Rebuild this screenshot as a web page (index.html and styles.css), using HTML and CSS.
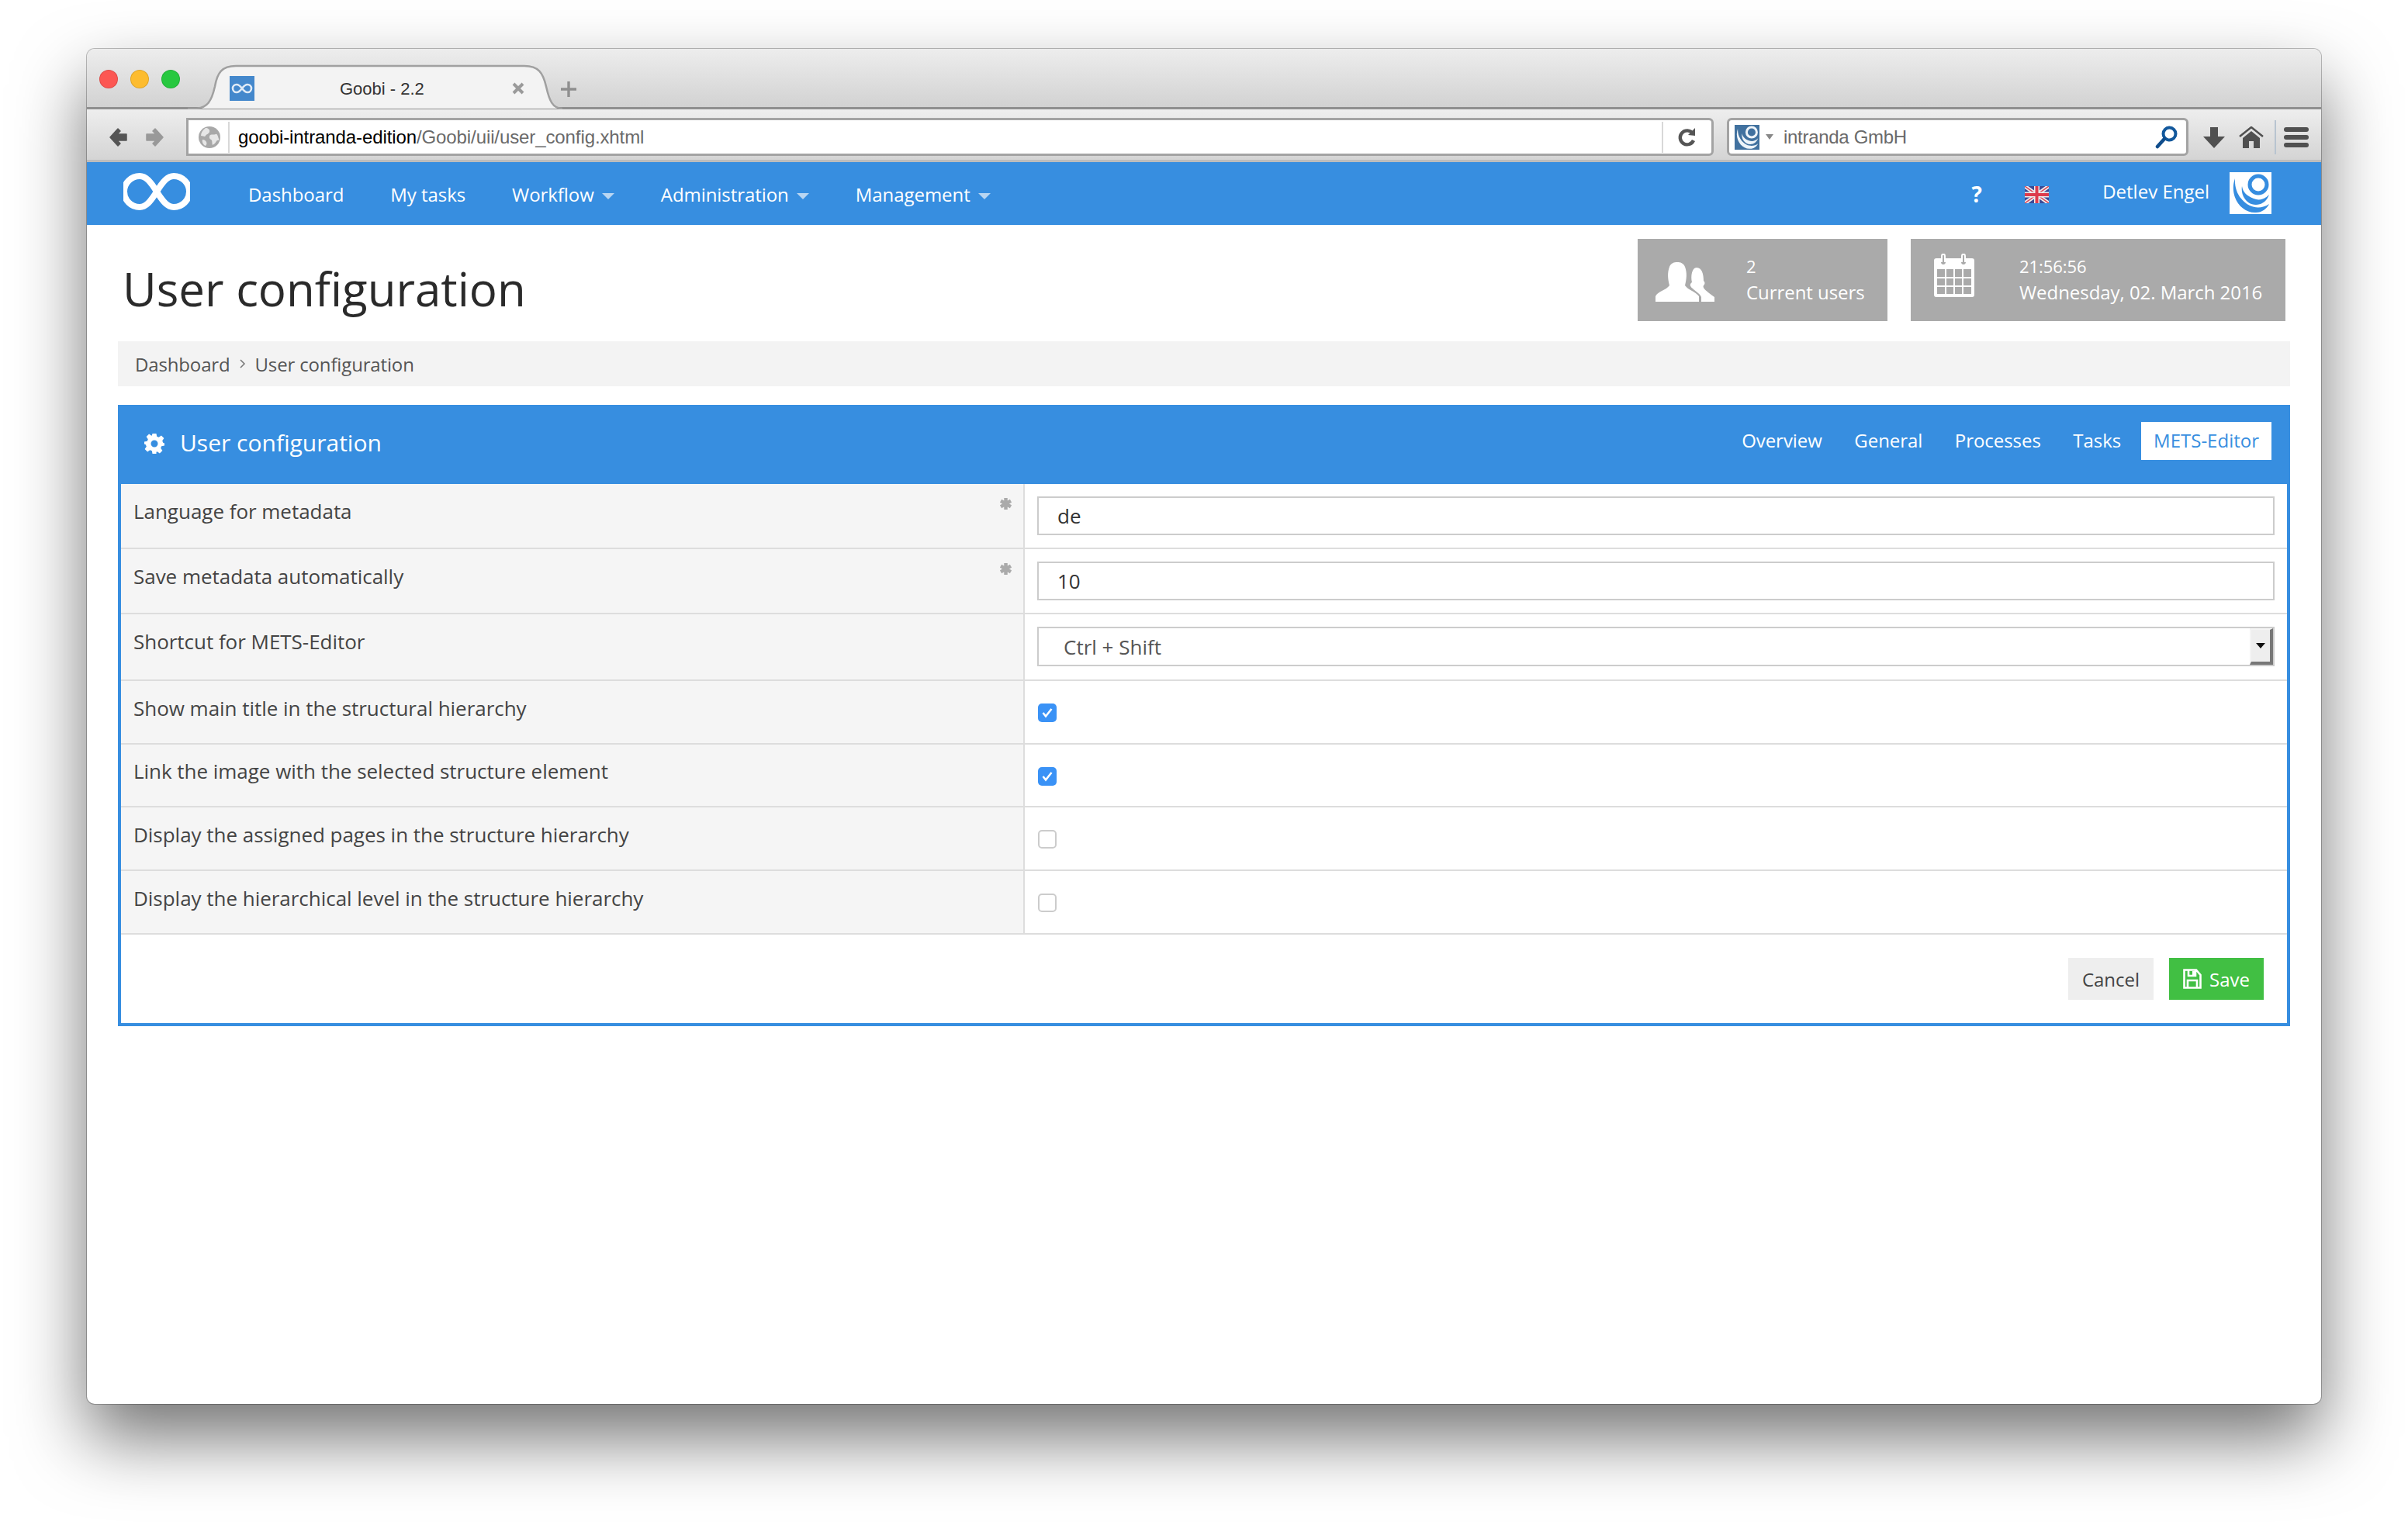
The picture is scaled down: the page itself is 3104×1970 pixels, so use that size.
FILE: index.html
```html
<!DOCTYPE html>
<html lang="en">
<head>
<meta charset="utf-8">
<title>Goobi - 2.2</title>
<link rel="stylesheet" href="styles.css">
</head>
<body>
<div class="window">
  <div class="tabstrip">
    <div class="lights"><i class="light red"></i><i class="light yellow"></i><i class="light green"></i></div>
    <div class="tab">
      <svg class="tab-shape" viewBox="0 0 483 58" preserveAspectRatio="none"><path d="M0 57H8C26 57 31 46 35 28C38 10 44 1 62 1H434C452 1 458 10 462 28C466 46 470 57 483 57" fill="#f3f3f3" stroke="#a0a0a0" stroke-width="2.5"/></svg>
      <span class="favicon"><svg viewBox="0 0 32 32" width="32" height="32"><path d="M16 16C13 12 11 11 9 11a5 5 0 0 0 0 10c2 0 4-1 7-5s5-5 7-5a5 5 0 0 1 0 10c-2 0-4-1-7-5z" fill="none" stroke="#dfeaf6" stroke-width="2.6"/></svg></span>
      <span class="tab-title">Goobi - 2.2</span>
      <svg class="tab-close" viewBox="0 0 16 16" width="16" height="16"><path d="M2 2L14 14M14 2L2 14" stroke="#9a9a9a" stroke-width="4"/></svg>
    </div>
    <svg class="tab-new" viewBox="0 0 20 20" width="20" height="20"><path d="M10 0V20M0 10H20" stroke="#8f8f8f" stroke-width="3.4"/></svg>
  </div>
  <div class="toolbar">
    <svg class="arrow" viewBox="0 0 24 26" width="24" height="26"><path d="M12 2L2 13L12 24L15 21L11 17H23V9H11L15 5Z" fill="#555" stroke="#555" stroke-width="1.5" stroke-linejoin="round"/></svg>
    <svg class="arrow" viewBox="0 0 24 26" width="24" height="26"><path d="M12 2L22 13L12 24L9 21L13 17H1V9H13L9 5Z" fill="#999" stroke="#999" stroke-width="1.5" stroke-linejoin="round"/></svg>
    <div class="urlbar">
      <svg class="globe" viewBox="0 0 28 28" width="28" height="28"><circle cx="14" cy="14" r="14" fill="#a8a8a8"/><path d="M9 2C5 5 3 8 3 12c3 0 5 2 6 0s4-2 5-5-2-5-5-5zM15 11c2-1 5 0 7-1s3 3 4 6-2 1-3 3-3 4-5 5c-1-3 0-6-2-7s-3-4-1-6zM5 17c2 0 4 1 5 3s0 4-1 5c-3-1-5-5-4-8z" fill="#e6e6e6"/></svg>
      <span class="urltext"><b class="host">goobi-intranda-edition</b>/Goobi/uii/user_config.xhtml</span>
      <span class="reload"><svg viewBox="0 0 24 28" width="24" height="28"><path d="M19 9A9 9 0 1 0 20 18" fill="none" stroke="#555" stroke-width="4.4"/><path d="M13 11L22 2V12Z" fill="#555"/></svg></span>
    </div>
    <div class="searchbar">
      <span class="engine"><svg viewBox="0 0 54 54" width="32" height="32"><rect width="54" height="54" fill="#41719f"/><circle cx="37" cy="16" r="11" fill="none" stroke="#eef4f9" stroke-width="5"/><path d="M7 8C-1 30 14 53 34 52C42 52 48 47 51 41C44 46 34 47 26 43C14 37 6 24 7 8Z" fill="#eef4f9"/><path d="M16 18C14 30 22 42 34 42C42 42 48 37 51 29C45 35 38 37 31 34C23 31 17 26 16 18Z" fill="#eef4f9"/></svg></span>
      <i class="engine-caret"></i>
      <span class="searchtext">intranda GmbH</span>
      <svg class="magnifier" viewBox="0 0 29 30" width="29" height="30"><circle cx="18.500" cy="10.500" r="8" fill="none" stroke="#12589c" stroke-width="4"/><path d="M12 17L3 27" stroke="#0f4d8c" stroke-width="4.500" stroke-linecap="round"/></svg>
    </div>
    <svg class="tool-down" viewBox="0 0 28 28" width="28" height="28"><path d="M9 1H19V13H28L14 28L0 13H9Z" fill="#505050"/></svg>
    <svg class="tool-home" viewBox="0 0 32 28" width="32" height="28"><path d="M1 13L16 1L31 13" fill="none" stroke="#505050" stroke-width="2.500"/><path d="M5 15L16 6L27 15V28H19V19H13V28H5Z" fill="#505050"/></svg>
    <i class="tool-sep"></i>
    <span class="hamburger"><i></i><i></i><i></i></span>
  </div>
  <nav class="topnav">
    <svg class="logo" viewBox="0 0 86 48" width="86" height="48"><path d="M43 24C35 11 29 4 21 4a20 20 0 0 0 0 40c8 0 14-7 22-20s14-20 22-20a20 20 0 0 1 0 40c-8 0-14-7-22-20z" fill="none" stroke="#fff" stroke-width="8"/></svg>
    <ul class="menu">
      <li>Dashboard</li>
      <li>My tasks</li>
      <li>Workflow<i class="caret"></i></li>
      <li>Administration<i class="caret"></i></li>
      <li>Management<i class="caret"></i></li>
    </ul>
    <span class="help">?</span>
    <svg class="flag" viewBox="0 0 31 22" width="31" height="22"><rect width="31" height="22" fill="#3a4a96"/><path d="M0 0L31 22M31 0L0 22" stroke="#eee" stroke-width="5"/><path d="M0 0L31 22M31 0L0 22" stroke="#d8485a" stroke-width="1.500"/><path d="M15.500 0V22M0 11H31" stroke="#eee" stroke-width="7"/><path d="M15.500 0V22M0 11H31" stroke="#dd3c4c" stroke-width="4"/></svg>
    <span class="username">Detlev Engel</span>
    <span class="avatar"><svg viewBox="0 0 54 54" width="54" height="54"><rect width="54" height="54" fill="#fff"/><circle cx="37" cy="16" r="11" fill="none" stroke="#368de0" stroke-width="5"/><path d="M7 8C-1 30 14 53 34 52C42 52 48 47 51 41C44 46 34 47 26 43C14 37 6 24 7 8Z" fill="#368de0"/><path d="M16 18C14 30 22 42 34 42C42 42 48 37 51 29C45 35 38 37 31 34C23 31 17 26 16 18Z" fill="#368de0"/></svg></span>
  </nav>
  <main class="page">
    <header class="page-head">
      <h1 class="page-title">User configuration</h1>
      <div class="stat stat-users">
        <svg class="stat-icon" viewBox="0 0 76 52" width="76" height="52"><path d="M0 51V44C2 38 14 36 18 30C16 22 15 14 18 6C20 1 24 0 28 0S36 1 38 6C41 14 40 22 38 30C42 36 52 38 56 44V51Z" fill="#fff"/><path d="M59 51V45C57 40 52 38 48 34C44 31 44 28 47 26C45 18 47 7 53 7C60 7 62 16 62 24C64 26 64 28 62 30C60 33 65 37 76 45V51Z" fill="#fff"/></svg>
        <div class="stat-text"><span>2</span><span>Current users</span></div>
      </div>
      <div class="stat stat-time">
        <svg class="stat-icon" viewBox="0 0 52 56" width="52" height="56"><path fill-rule="evenodd" fill="#fff" d="M3 6H9V11C9 15 15 15 15 11V6H35V11C35 15 41 15 41 11V6H49C51 6 52 7 52 9V53C52 55 51 56 49 56H3C1 56 0 55 0 53V9C0 7 1 6 3 6ZM4 20V30H14V20ZM16 20V30H25V20ZM27 20V30H36V20ZM38 20V30H48V20ZM4 32V41H14V32ZM16 32V41H25V32ZM27 32V41H36V32ZM38 32V41H48V32ZM4 43V52H14V43ZM16 43V52H25V43ZM27 43V52H36V43ZM38 43V52H48V43Z"/><path d="M10 11V3C10 0 14 0 14 3V11M36 11V3C36 0 40 0 40 3V11" fill="none" stroke="#fff" stroke-width="2"/></svg>
        <div class="stat-text"><span>21:56:56</span><span>Wednesday, 02. March 2016</span></div>
      </div>
    </header>
    <div class="breadcrumb"><span>Dashboard</span><svg class="crumb-sep" viewBox="0 0 8 12" width="8" height="12"><path d="M1 1L6 6L1 11" fill="none" stroke="#777" stroke-width="1.500"/></svg><span>User configuration</span></div>
    <section class="panel">
      <div class="panel-head">
        <svg class="gear" viewBox="0 0 26 26" width="26" height="26"><path fill-rule="evenodd" fill="#fff" d="M10.500 0H15.500L16.200 3.800L18.700 4.800L21.900 2.600L25.400 6.100L23.200 9.300L24.200 11.800L26 12.500V15.500L22.200 16.200L21.200 18.700L23.400 21.900L19.900 25.400L16.700 23.200L15.500 23.700V26H10.500L9.800 22.200L7.300 21.200L4.100 23.400L.6 19.900L2.800 16.700L1.800 14.200L0 13.500V10.500L3.800 9.800L4.800 7.300L2.600 4.100L6.100 .6L9.300 2.800L9.800 2.500ZM13 8.500A4.500 4.500 0 1 0 13 17.500A4.500 4.500 0 1 0 13 8.500Z"/></svg>
        <h2 class="panel-title">User configuration</h2>
        <ul class="panel-tabs">
          <li>Overview</li><li>General</li><li>Processes</li><li>Tasks</li><li class="active">METS-Editor</li>
        </ul>
      </div>
      <div class="panel-body">
        <div class="row row-1"><div class="label">Language for metadata<svg class="req" viewBox="0 0 15 15" width="15" height="15"><path d="M7.500 0V15M1 3.700L14 11.300M14 3.700L1 11.300" stroke="#aaa" stroke-width="4.500"/></svg></div><div class="field"><input class="text" type="text" value="de"></div></div>
        <div class="row row-2"><div class="label">Save metadata automatically<svg class="req" viewBox="0 0 15 15" width="15" height="15"><path d="M7.500 0V15M1 3.700L14 11.300M14 3.700L1 11.300" stroke="#aaa" stroke-width="4.500"/></svg></div><div class="field"><input class="text" type="text" value="10"></div></div>
        <div class="row row-3"><div class="label">Shortcut for METS-Editor</div><div class="field"><div class="select"><span>Ctrl + Shift</span><span class="select-btn"><i></i></span></div></div></div>
        <div class="row row-c"><div class="label">Show main title in the structural hierarchy</div><div class="field"><span class="check on"><svg viewBox="0 0 24 24" width="24" height="24"><path d="M6.500 12L10 16.500L17.500 7" fill="none" stroke="#fff" stroke-width="2.600"/></svg></span></div></div>
        <div class="row row-c row-short"><div class="label">Link the image with the selected structure element</div><div class="field"><span class="check on"><svg viewBox="0 0 24 24" width="24" height="24"><path d="M6.500 12L10 16.500L17.500 7" fill="none" stroke="#fff" stroke-width="2.600"/></svg></span></div></div>
        <div class="row row-c"><div class="label">Display the assigned pages in the structure hierarchy</div><div class="field"><span class="check"></span></div></div>
        <div class="row row-c"><div class="label">Display the hierarchical level in the structure hierarchy</div><div class="field"><span class="check"></span></div></div>
        <div class="actions">
          <button class="btn btn-cancel" type="button">Cancel</button>
          <button class="btn btn-save" type="button"><svg viewBox="0 0 24 26" width="24" height="26"><path d="M1.500 1.500H17L22.500 8V24.500H1.500Z M7 2V9H16V2 M6 24V15H18V24" fill="none" stroke="#fff" stroke-width="2.600"/><path d="M12 3H15V8H12Z" fill="#fff"/></svg>Save</button>
        </div>
      </div>
    </section>
  </main>
</div>
</body>
</html>
```
FILE: styles.css
```css
* { box-sizing: border-box; }
html, body { margin: 0; height: 100%; background: #fff; }
body { padding: 63px 112px 0; font-family: "Open Sans", "Noto Sans", sans-serif; overflow: hidden; }
ul { list-style: none; margin: 0; padding: 0; }
h1, h2 { margin: 0; font-weight: 400; }
i { font-style: normal; }

.window { width: 2880px; height: 1747px; background: #fff; border-radius: 10px; box-shadow: 0 0 0 1px rgba(0,0,0,.25), 0 44px 90px rgba(0,0,0,.55); overflow: hidden; display: flex; flex-direction: column; }

.tabstrip { height: 78px; flex: none; display: flex; background: linear-gradient(#ededed, #d2d2d2); border-bottom: 3px solid #8f8f8f; }
.lights { display: flex; gap: 16px; padding: 27px 0 0 16px; width: 130px; flex: none; }
.light { width: 24px; height: 24px; border-radius: 50%; border: 1px solid rgba(0,0,0,.12); }
.red { background: #fc5753; }
.yellow { background: #fdbc2f; }
.green { background: #27c83f; }
.tab { position: relative; width: 483px; height: 57px; margin-top: 21px; display: flex; align-items: flex-start; padding: 14px 0 0 54px; flex: none; }
.tab-shape { position: absolute; left: 0; top: 0; width: 483px; height: 57px; overflow: visible; }
.favicon { position: relative; width: 32px; height: 32px; background: #4488cc; flex: none; }
.favicon svg, .engine svg, .avatar svg { display: block; }
.tab-title { position: relative; font: 22px/34px "Liberation Sans", sans-serif; color: #333; margin-left: 110px; width: 222px; }
.tab-close { position: relative; margin: 8px 0 0 0; flex: none; }
.tab-new { margin: 42px 0 0 -2px; flex: none; }

.toolbar { height: 68px; flex: none; display: flex; align-items: center; background: linear-gradient(#eeeeee, #d4d4d4); border-bottom: 3px solid #bdbdbd; padding: 6px 0 0 28px; position: relative; }
.arrow { flex: none; margin-right: 24px; }
.arrow + .arrow { margin-right: 28px; }
.urlbar { width: 1969px; height: 49px; flex: none; background: #fff; border: 3px solid #a3a3a3; border-radius: 0 6px 6px 0; display: flex; align-items: center; padding-left: 13px; }
.globe { flex: none; }
.urltext { flex: 1; margin-left: 10px; padding-left: 11px; border-left: 2px solid #d8d8d8; font: 24px/40px "Liberation Sans", sans-serif; color: #6a6a6a; white-space: nowrap; letter-spacing: -.1px; }
.host { font-weight: 400; color: #000; }
.reload { width: 64px; height: 40px; border-left: 2px solid #d8d8d8; display: flex; align-items: center; justify-content: center; flex: none; }
.searchbar { width: 595px; height: 49px; flex: none; margin-left: 17px; background: #fff; border: 3px solid #a3a3a3; border-radius: 6px; display: flex; align-items: center; padding-left: 7px; }
.engine { width: 32px; height: 32px; flex: none; }
.engine-caret { width: 0; height: 0; border: 5px solid transparent; border-top: 7px solid #888; border-bottom: 0; margin-left: 8px; }
.searchtext { flex: 1; margin-left: 13px; font: 24px/40px "Liberation Sans", sans-serif; color: #6a6a6a; letter-spacing: -.3px; }
.magnifier { flex: none; margin-right: 11px; }
.tool-down { flex: none; margin-left: 19px; }
.tool-home { flex: none; margin-left: 18px; }
.tool-sep { width: 2px; height: 44px; background: #b8c4d0; margin-left: 14px; flex: none; }
.hamburger { width: 32px; display: flex; flex-direction: column; gap: 4px; margin-left: 10px; flex: none; }
.hamburger i { height: 6px; border-radius: 3px; background: #505050; }

.topnav { height: 81px; flex: none; background: #378ee0; display: flex; align-items: center; padding: 0 64px 0 47px; color: #fff; font-size: 24px; }
.logo { flex: none; margin-top: -5px; }
.menu { display: flex; gap: 60px; margin-left: 75px; flex: 1; letter-spacing: -.06px; padding-top: 1px; }
.caret { display: inline-block; width: 0; height: 0; border: 8px solid transparent; border-top: 8px solid #b9d6f2; border-bottom: 0; margin-left: 10px; vertical-align: 3px; }
.help { font-weight: 700; font-size: 28px; width: 16px; text-align: center; margin-left: 2px; }
.flag { margin-left: 54px; flex: none; margin-top: 2px; }
.username { margin-left: 69px; line-height: 1; margin-top: -6px; }
.avatar { width: 54px; height: 54px; margin-left: 26px; flex: none; margin-top: -1px; }

.page { flex: 1; padding: 18px 40px 0; min-height: 0; }
.page-head { display: flex; height: 114px; align-items: flex-start; }
.page-title { flex: 1; font-size: 60px; line-height: 72px; color: #2a2a2a; padding: 28px 0 0 6px; white-space: nowrap; }
.stat { height: 106px; background: #aaa; color: #fff; display: flex; font-size: 24px; flex: none; }
.stat-users { width: 322px; padding-left: 23px; }
.stat-time { width: 483px; padding-left: 30px; margin: 0 6px 0 30px; }
.stat-users .stat-icon { margin-top: 30px; }
.stat-time .stat-icon { margin-top: 19px; }
.stat-icon { flex: none; }
.stat-text { display: flex; flex-direction: column; margin-left: 41px; line-height: 34px; padding-top: 18px; letter-spacing: -.05px; }
.stat-time .stat-text { margin-left: 58px; }
.stat-text span:first-child { font-size: 22px; }
.breadcrumb { margin-top: 18px; height: 58px; background: #f3f3f3; display: flex; align-items: center; padding-left: 22px; font-size: 24px; color: #555; letter-spacing: -.15px; }
.crumb-sep { margin: 0 12px; }

.panel { margin-top: 24px; height: 801px; border: 4px solid #378ee0; border-top: 0; }
.panel-head { height: 102px; margin: 0 -4px; background: #378ee0; color: #fff; display: flex; align-items: center; padding: 0 24px 0 34px; }
.gear { flex: none; margin-top: -2px; }
.panel-title { font-size: 30px; margin-left: 20px; flex: 1; margin-top: -5px; }
.panel-tabs { display: flex; align-items: center; font-size: 24px; margin-top: -10px; letter-spacing: -.05px; }
.panel-tabs li { height: 49px; line-height: 47px; padding: 0 17px; margin-left: 7.5px; }
.panel-tabs .active { background: #fff; color: #378ee0; padding: 0 16px; margin-left: 9px; letter-spacing: 0; }

.row { display: flex; border-bottom: 2px solid #ddd; }
.row-1 { height: 84px; }
.row-2 { height: 84px; }
.row-3 { height: 86px; }
.row-c { height: 82px; }
.row-short { height: 81px; }
.label { width: 1165px; flex: none; background: #f5f5f5; border-right: 2px solid #ddd; padding: 17px 0 0 16px; font-size: 26px; line-height: 36px; color: #444; position: relative; letter-spacing: -.03px; }
.row-short .label { padding-top: 16px; }
.req { position: absolute; right: 15px; top: 18px; }
.field { flex: 1; padding: 16px 16px 0 16px; min-width: 0; }
.text { display: block; width: 100%; height: 50px; border: 2px solid #ccc; padding: 0 24px; background: #fff; font: 26px "Open Sans", sans-serif; color: #333; outline: 0; }
.select { height: 51px; border: 2px solid #ccc; padding-left: 32px; display: flex; align-items: center; justify-content: space-between; font-size: 26px; color: #555; }
.select-btn { width: 30px; height: 47px; background: #eee; border-style: solid; border-width: 2px 4px 4px 2px; border-color: #f4f4f4 #777 #777 #f4f4f4; display: flex; align-items: center; justify-content: center; }
.select-btn i { width: 0; height: 0; border: 6px solid transparent; border-top: 7px solid #111; border-bottom: 0; }
.row-c .field { padding: 29px 0 0 17px; }
.check { display: block; width: 24px; height: 24px; border-radius: 5px; border: 2px solid #ccc; background: #fff; }
.check.on { border: 0; background: #3a92f6; }
.check svg { display: block; }

.actions { display: flex; justify-content: flex-end; gap: 20px; padding: 30px 30px 0 0; }
.btn { height: 54px; border: 0; border-radius: 0; font: 24px "Open Sans", sans-serif; padding: 0; display: flex; align-items: center; justify-content: center; }
.btn-cancel { width: 110px; background: #eee; color: #444; }
.btn-save { width: 122px; background: #41bf43; color: #fff; gap: 10px; }
```
